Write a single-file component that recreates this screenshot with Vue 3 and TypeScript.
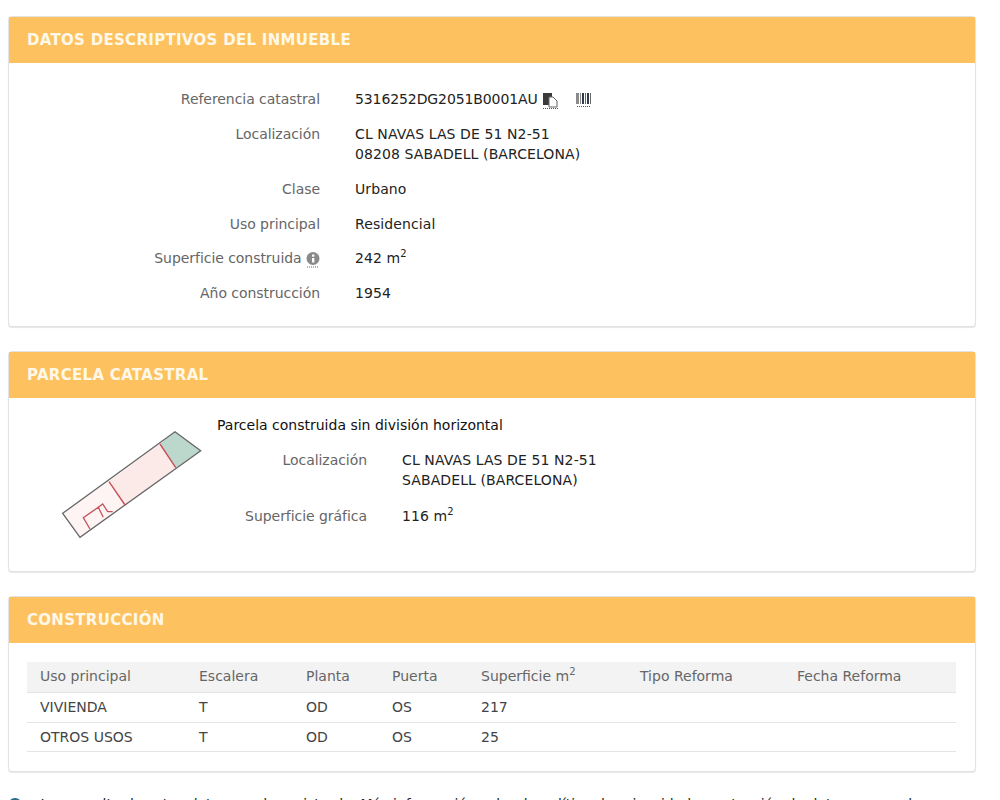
<script setup lang="ts">
interface Row {
  label: string
  lines: string[]
  sup?: boolean
  info?: boolean
  icons?: boolean
}

const rows: Row[] = [
  { label: 'Referencia catastral', lines: ['5316252DG2051B0001AU'], icons: true },
  { label: 'Localización', lines: ['CL NAVAS LAS DE 51 N2-51', '08208 SABADELL (BARCELONA)'] },
  { label: 'Clase', lines: ['Urbano'] },
  { label: 'Uso principal', lines: ['Residencial'] },
  { label: 'Superficie construida', lines: ['242 m'], sup: true, info: true },
  { label: 'Año construcción', lines: ['1954'] },
]

const parcelRows: Row[] = [
  { label: 'Localización', lines: ['CL NAVAS LAS DE 51 N2-51', 'SABADELL (BARCELONA)'] },
  { label: 'Superficie gráfica', lines: ['116 m'], sup: true },
]

const units = [
  { uso: 'VIVIENDA', escalera: 'T', planta: 'OD', puerta: 'OS', superficie: '217' },
  { uso: 'OTROS USOS', escalera: 'T', planta: 'OD', puerta: 'OS', superficie: '25' },
]
</script>

<template>
  <div class="page">
    <section class="panel">
      <h2 class="panel-head">DATOS DESCRIPTIVOS DEL INMUEBLE</h2>
      <div class="panel-body details">
        <div v-for="row in rows" :key="row.label" class="row">
          <div class="label">
            {{ row.label }}
            <svg v-if="row.info" class="info" width="14" height="16" viewBox="0 0 14 16">
              <circle cx="7" cy="6.5" r="6.5" fill="#8a8a8a" />
              <rect x="6" y="6" width="2.4" height="4.5" fill="#fff" />
              <rect x="6" y="2.5" width="2.4" height="2.2" fill="#fff" />
              <path d="M1 15h12" stroke="#666" stroke-dasharray="1 1" />
            </svg>
          </div>
          <div class="value">
            <div v-for="line in row.lines" :key="line" class="line" :class="{ code: row.icons }">
              {{ line }}<sup v-if="row.sup">2</sup>
              <template v-if="row.icons">
                <svg class="icon-copy" width="17" height="18" viewBox="0 0 17 18">
                  <rect x="1" y="1" width="9" height="12" fill="#3a3a3a" />
                  <path d="M7 5h4l4 4v6H7z" fill="#fff" stroke="#666" />
                  <path d="M1 16.5h15" stroke="#555" stroke-dasharray="1 1" />
                </svg>
                <svg class="icon-barcode" width="17" height="18" viewBox="0 0 17 18">
                  <path d="M1 1h3v11H1zM5 1h1v11H5z" fill="#8a8a8a" />
                  <path d="M7 1h2v11H7zM12 1h2v11h-2z" fill="#2f3a4a" />
                  <path d="M10 1h1v11h-1zM15 1h1v11h-1z" fill="#666" />
                  <path d="M2 14.5h13" stroke="#555" stroke-dasharray="1 1" />
                </svg>
              </template>
            </div>
          </div>
        </div>
      </div>
    </section>

    <section class="panel">
      <h2 class="panel-head">PARCELA CATASTRAL</h2>
      <div class="panel-body parcel">
        <svg class="plot" width="180" height="130" viewBox="0 0 180 130">
          <path d="M22.7 93.3 L135 11.7 L160.7 30.7 L40 117.3 Z" fill="#fdf4f3" />
          <path d="M69 61.7 L120 24 L135.7 47.7 L85 85 Z" fill="#fceae8" />
          <path d="M120 24 L135 11.7 L160.7 30.7 L135.7 47.7 Z" fill="#bcd8cc" />
          <path d="M22.7 93.3 L135 11.7 L160.7 30.7 L40 117.3 Z" fill="none" stroke="#666" stroke-width="1.3" />
          <path d="M69 61.7 L85 85 M120 24 L135.7 47.7" stroke="#c8505a" stroke-width="1.4" fill="none" />
          <path d="M50 109 L43.3 97.7 L58.3 87.3 L63.3 97.3 M58.3 87.3 L62.7 84 L67.7 91.7 L72.7 91.7" stroke="#c8505a" stroke-width="1.3" fill="none" />
        </svg>
        <div class="parcel-info">
          <p class="parcel-note">Parcela construida sin división horizontal</p>
          <div v-for="row in parcelRows" :key="row.label" class="row">
            <div class="label narrow">{{ row.label }}</div>
            <div class="value">
              <div v-for="line in row.lines" :key="line" class="line">
                {{ line }}<sup v-if="row.sup">2</sup>
              </div>
            </div>
          </div>
        </div>
      </div>
    </section>

    <section class="panel">
      <h2 class="panel-head">CONSTRUCCIÓN</h2>
      <div class="panel-body building">
        <table>
          <colgroup>
            <col style="width: 159px" />
            <col style="width: 107px" />
            <col style="width: 86px" />
            <col style="width: 89px" />
            <col style="width: 159px" />
            <col style="width: 157px" />
            <col />
          </colgroup>
          <thead>
            <tr>
              <th>Uso principal</th>
              <th>Escalera</th>
              <th>Planta</th>
              <th>Puerta</th>
              <th>Superficie m<sup>2</sup></th>
              <th>Tipo Reforma</th>
              <th>Fecha Reforma</th>
            </tr>
          </thead>
          <tbody>
            <tr v-for="unit in units" :key="unit.uso">
              <td>{{ unit.uso }}</td>
              <td>{{ unit.escalera }}</td>
              <td>{{ unit.planta }}</td>
              <td>{{ unit.puerta }}</td>
              <td>{{ unit.superficie }}</td>
              <td></td>
              <td></td>
            </tr>
          </tbody>
        </table>
      </div>
    </section>

    <p class="footnote">
      <span class="dot"></span>
      La consulta de estos datos queda registrada. Más información sobre la política de privacidad y protección de datos personales
    </p>
  </div>
</template>

<style>
html,
body {
  background: #fff;
  overflow: hidden;
  height: 800px;
}
</style>

<style scoped>
.page {
  width: 968px;
  padding: 16px 0 0 8px;
  font-family: "DejaVu Sans", sans-serif;
  font-size: 14px;
  color: #222;
}

.panel {
  border: 1px solid #e3e3e3;
  border-radius: 4px;
  margin-bottom: 24px;
  box-shadow: 0 1px 1px rgba(0, 0, 0, 0.1);
  background: #fff;
}

.panel-head {
  margin: 0;
  height: 46px;
  line-height: 47px;
  padding-left: 18px;
  background: #fdc25f;
  color: #fff8e8;
  font-size: 15px;
  font-weight: bold;
  letter-spacing: 0.3px;
}

.details {
  height: 263px;
  padding-top: 26px;
  box-sizing: border-box;
}

.row {
  display: flex;
  margin-bottom: 15px;
  line-height: 20px;
}

.details .row:nth-child(4) {
  margin-bottom: 14px;
}

.label {
  width: 311px;
  text-align: right;
  color: #666;
  flex-shrink: 0;
  letter-spacing: -0.05px;
}

.label.narrow {
  width: 150px;
}

.value {
  margin-left: 35px;
  letter-spacing: 0.1px;
}

.code {
  letter-spacing: -0.1px;
}

sup {
  font-size: 10px;
  line-height: 0;
}

.info {
  vertical-align: -1px;
  margin-block: -4px;
}

.icon-copy {
  vertical-align: -2px;
  margin-block: -4px;
  margin-left: 4px;
}

.icon-barcode {
  vertical-align: -2px;
  margin-block: -4px;
  margin-left: 16px;
}

.parcel {
  height: 173px;
  display: flex;
  box-sizing: border-box;
}

.plot {
  flex-shrink: 0;
  margin: 22px 0 0 31px;
}

.parcel-info {
  margin-left: -3px;
  padding-top: 17px;
}

.parcel-info .row {
  margin-bottom: 16px;
}

.parcel-note {
  margin: 0 0 15px;
  line-height: 20px;
  color: #111;
}

.building {
  height: 128px;
  padding: 19px 18px 0;
  box-sizing: border-box;
}

table {
  width: 929px;
  border-collapse: collapse;
  table-layout: fixed;
}

th,
td {
  box-sizing: border-box;
  text-align: left;
  padding: 0 0 0 13px;
  font-weight: normal;
  height: 30px;
  border-bottom: 1px solid #e4e4e4;
}

td {
  color: #444;
}

tbody tr:last-child td {
  height: 29px;
}

th {
  background: #f3f3f3;
  color: #666;
  padding-bottom: 2px;
}

.footnote {
  margin: 2px 0 0;
  line-height: 16px;
  color: #222;
  white-space: nowrap;
}

.dot {
  display: inline-block;
  width: 14px;
  height: 14px;
  border-radius: 50%;
  background: #2a6a8f;
  margin-right: 14px;
  vertical-align: -3px;
}
</style>
